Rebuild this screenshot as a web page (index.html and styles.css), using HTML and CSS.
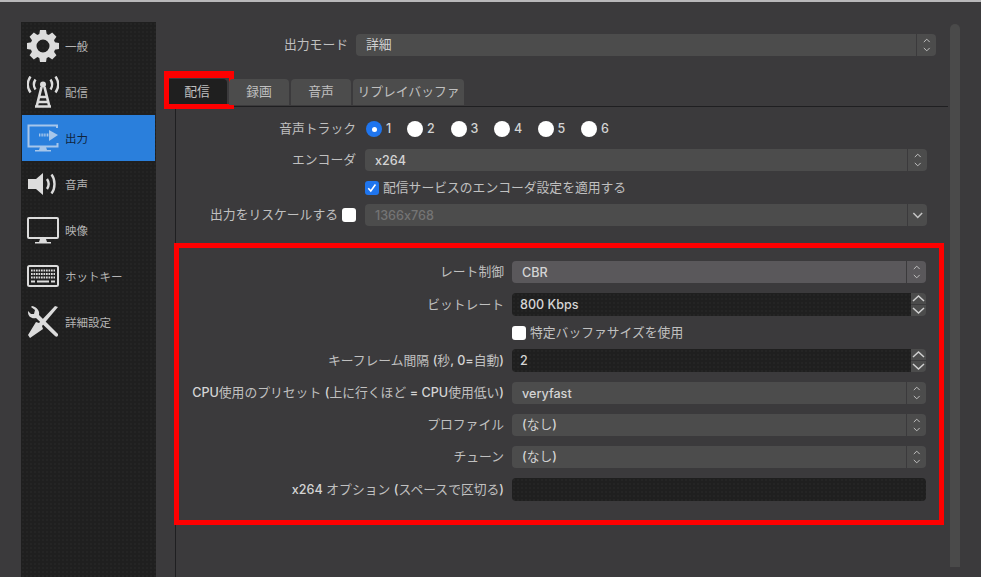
FILE: index.html
```html
<!DOCTYPE html>
<html lang="ja">
<head>
<meta charset="utf-8">
<title>設定 - 出力</title>
<link rel="stylesheet" href="styles.css">
</head>
<body>
<div class="window">
  <nav class="sidebar">
    <div class="item">
      <svg class="icon" viewBox="0 0 32 32"><circle cx="16" cy="16" r="9.500" fill="none" stroke="currentColor" stroke-width="6"/><g fill="currentColor"><path d="M13 0h6l1 6h-8z"/><path d="M13 0h6l1 6h-8z" transform="rotate(45 16 16)"/><path d="M13 0h6l1 6h-8z" transform="rotate(90 16 16)"/><path d="M13 0h6l1 6h-8z" transform="rotate(135 16 16)"/><path d="M13 0h6l1 6h-8z" transform="rotate(180 16 16)"/><path d="M13 0h6l1 6h-8z" transform="rotate(225 16 16)"/><path d="M13 0h6l1 6h-8z" transform="rotate(270 16 16)"/><path d="M13 0h6l1 6h-8z" transform="rotate(315 16 16)"/></g></svg>
      <span>一般</span>
    </div>
    <div class="item">
      <svg class="icon" viewBox="0 0 32 32"><g fill="none" stroke="currentColor" stroke-width="2.400"><path d="M3.500 .5c-3.500 5-3.500 11 0 16"/><path d="M8.500 3.500c-2 3-2 7 0 10"/><path d="M28.500 .5c3.500 5 3.500 11 0 16"/><path d="M23.500 3.500c2 3 2 7 0 10"/><path d="M14.500 11 9.500 31M17.500 11 22.500 31M12 21h8M10 26h12M8 30.500h16" stroke-width="2.600"/></g><circle cx="16" cy="8.500" r="3" fill="currentColor"/></svg>
      <span>配信</span>
    </div>
    <div class="item active">
      <svg class="icon" viewBox="0 0 32 32"><path d="M30 6V3.500H1.500V24.500H30.500V21" fill="none" stroke="currentColor" stroke-width="2"/><path d="M13 25h6l1 3h4v1.500H8V28h4z" fill="currentColor"/><path d="M12 13h11" stroke="currentColor" stroke-width="3" stroke-dasharray="1 .6" fill="none"/><path d="M22 8l9 5-9 6z" fill="currentColor"/></svg>
      <span>出力</span>
    </div>
    <div class="item">
      <svg class="icon" viewBox="0 0 32 32"><path d="M1 11h8l7-6v22l-7-6H1z" fill="currentColor"/><g fill="none" stroke="currentColor" stroke-width="2.400"><path d="M20 11c2 3 2 7 0 10"/><path d="M24.500 6.500c4 5 4 14 0 19"/></g></svg>
      <span>音声</span>
    </div>
    <div class="item">
      <svg class="icon" viewBox="0 0 32 32"><rect x="1" y="4" width="30" height="20" rx="1" fill="none" stroke="currentColor" stroke-width="2"/><path d="M13 25h6l1 3h4v1.500H8V28h4z" fill="currentColor"/></svg>
      <span>映像</span>
    </div>
    <div class="item">
      <svg class="icon" viewBox="0 0 32 32"><rect x="1" y="6" width="30" height="20" rx="1.500" fill="none" stroke="currentColor" stroke-width="2"/><g fill="none" stroke="currentColor" stroke-width="2" stroke-dasharray="1.700 .8"><path d="M4 10.500h24M4 14h24M4 17.500h24"/></g><path d="M4 21.500h4M10 21.500h12M24 21.500h4" stroke="currentColor" stroke-width="2" fill="none"/></svg>
      <span>ホットキー</span>
    </div>
    <div class="item">
      <svg class="icon" viewBox="0 0 32 32"><path d="M31 1 28 0 12 17l-3-1L1 29l2 3 13-9-1-3z" fill="currentColor"/><path d="M1 6c0 5 4 7 8 6l19 18c1 1 3 1 3-1v-1L12 9c1-4-2-8-7-9l-1 1 4 3-1 4-3 0-3-3z" fill="currentColor"/></svg>
      <span>詳細設定</span>
    </div>
  </nav>

  <main class="content">
    <div class="mode-row">
      <label class="mode-label">出力モード</label>
      <div class="combo mode-combo"><span class="combo-text">詳細</span><span class="combo-btn"><svg viewBox="0 0 20 22"><path d="M7 8l3-3 3 3M7 14l3 3 3-3"/></svg></span></div>
    </div>

    <div class="tabs">
      <div class="tab tab-active">配信<span class="tab-mark"></span></div>
      <div class="tab">録画</div>
      <div class="tab">音声</div>
      <div class="tab tab-wide">リプレイバッファ</div>
    </div>

    <section class="pane">
      <div class="upper">
        <div class="row track-row">
          <div class="label">音声トラック</div>
          <div class="radios">
            <span class="radio-item"><i class="radio on"></i><b>1</b></span>
            <span class="radio-item"><i class="radio"></i><b>2</b></span>
            <span class="radio-item"><i class="radio"></i><b>3</b></span>
            <span class="radio-item"><i class="radio"></i><b>4</b></span>
            <span class="radio-item"><i class="radio"></i><b>5</b></span>
            <span class="radio-item"><i class="radio"></i><b>6</b></span>
          </div>
        </div>
        <div class="row">
          <div class="label">エンコーダ</div>
          <div class="combo"><span class="combo-text lat">x264</span><span class="combo-btn"><svg viewBox="0 0 20 22"><path d="M7 8l3-3 3 3M7 14l3 3 3-3"/></svg></span></div>
        </div>
        <div class="row check-row">
          <div class="label"></div>
          <div class="check-item"><i class="check on"><svg viewBox="0 0 15 15"><path d="M3.500 7.800l2.700 3 5-7"/></svg></i><span>配信サービスのエンコーダ設定を適用する</span></div>
        </div>
        <div class="row">
          <div class="label label-check">出力をリスケールする<i class="check"></i></div>
          <div class="combo disabled"><span class="combo-text lat">1366x768</span><span class="combo-btn"><svg viewBox="0 0 20 22"><path class="thick" d="M5.500 9l4.500 4.500L14.500 9"/></svg></span></div>
        </div>
      </div>

      <div class="group">
        <div class="row">
          <div class="label">レート制御</div>
          <div class="combo hover"><span class="combo-text lat">CBR</span><span class="combo-btn"><svg viewBox="0 0 20 22"><path d="M7 8l3-3 3 3M7 14l3 3 3-3"/></svg></span></div>
        </div>
        <div class="row spin-row">
          <div class="label">ビットレート</div>
          <div class="spin"><span class="spin-text lat">800 Kbps</span><span class="spin-btns"><span class="spin-btn"><svg viewBox="0 0 15 11"><path d="M2 8l5.500-5L13 8"/></svg></span><span class="spin-btn"><svg viewBox="0 0 15 11"><path d="M2 3l5.500 5L13 3"/></svg></span></span></div>
        </div>
        <div class="row thin-row">
          <div class="label"></div>
          <div class="check-item"><i class="check"></i><span>特定バッファサイズを使用</span></div>
        </div>
        <div class="row spin-row">
          <div class="label">キーフレーム間隔 <span class="lat">(</span>秒<span class="lat">, 0=</span>自動<span class="lat">)</span></div>
          <div class="spin"><span class="spin-text lat">2</span><span class="spin-btns"><span class="spin-btn"><svg viewBox="0 0 15 11"><path d="M2 8l5.500-5L13 8"/></svg></span><span class="spin-btn"><svg viewBox="0 0 15 11"><path d="M2 3l5.500 5L13 3"/></svg></span></span></div>
        </div>
        <div class="row">
          <div class="label"><span class="lat">CPU</span>使用のプリセット <span class="lat">(</span>上に行くほど <span class="lat">= CPU</span>使用低い<span class="lat">)</span></div>
          <div class="combo"><span class="combo-text lat">veryfast</span><span class="combo-btn"><svg viewBox="0 0 20 22"><path d="M7 8l3-3 3 3M7 14l3 3 3-3"/></svg></span></div>
        </div>
        <div class="row">
          <div class="label">プロファイル</div>
          <div class="combo"><span class="combo-text"><span class="lat">(</span>なし<span class="lat">)</span></span><span class="combo-btn"><svg viewBox="0 0 20 22"><path d="M7 8l3-3 3 3M7 14l3 3 3-3"/></svg></span></div>
        </div>
        <div class="row">
          <div class="label">チューン</div>
          <div class="combo"><span class="combo-text"><span class="lat">(</span>なし<span class="lat">)</span></span><span class="combo-btn"><svg viewBox="0 0 20 22"><path d="M7 8l3-3 3 3M7 14l3 3 3-3"/></svg></span></div>
        </div>
        <div class="row spin-row">
          <div class="label"><span class="lat">x264</span> オプション <span class="lat">(</span>スペースで区切る<span class="lat">)</span></div>
          <div class="spin full"></div>
        </div>
      </div>
    </section>
  </main>

  <div class="scrollbar"></div>
</div>
</body>
</html>
```

FILE: styles.css
```css
* { box-sizing: border-box; }
html, body { margin: 0; height: 100%; }
body {
  background: #3b3a3c;
  overflow: hidden;
  font-family: "Liberation Sans", "Noto Sans CJK JP", sans-serif;
  font-size: 12.800px;
  line-height: 14px;
  color: #c0c0c0;
}
.window {
  height: 577px;
  display: flex;
  align-items: flex-start;
  padding: 22px 0 0 21px;
  border-top: 2px solid #b9b8ba;
}
.sidebar {
  width: 135px;
  height: 555px;
  margin-top: -2px;
  padding: 1px 1px 0;
  flex: none;
  background-color: #1f1f1f;
  background-image: radial-gradient(#242424 35%, transparent 40%);
  background-size: 4px 4px;
  display: flex;
  flex-direction: column;
}
.item {
  height: 46px;
  flex: none;
  display: flex;
  align-items: center;
  gap: 6px;
  padding-left: 5px;
  font-size: 11.500px;
  color: #b4b4b4;
}
.item span { padding-top: 2px; }
.icon { width: 32px; height: 32px; flex: none; color: #dcdcdc; }
.active { background: #2a7fdc; color: #10243c; }
.active .icon { color: #a6c6ea; }

.content {
  width: 792px;
  flex: none;
  height: 555px;
  margin-top: -2px;
  display: flex;
  flex-direction: column;
  padding-top: 12px;
}
.mode-row { display: flex; align-items: center; gap: 8px; padding-right: 12px; }
.mode-label { width: 192px; text-align: right; flex: none; }
.combo {
  flex: 1;
  height: 22px;
  display: flex;
  align-items: center;
  background: #4c4c4c;
  border-radius: 4px;
  color: #d0d0d0;
}
.combo-text { flex: 1; padding-left: 10px; }
.combo-text.lat { padding-top: 2px; }
.combo-btn {
  width: 20.500px;
  height: 100%;
  flex: none;
  border-left: 1px solid #3b3a3c;
  display: flex;
}
.combo-btn svg { width: 20px; height: 22px; }
.combo-btn path { fill: none; stroke: #c4c4c4; stroke-width: 1; }
.combo-btn path.thick { stroke-width: 1.600; }
.hover { background: #5a585b; }
.disabled .combo-text { color: #747474; }

.tabs {
  display: flex;
  gap: 2px;
  margin: 23px 0 0 11px;
  height: 26px;
  flex: none;
}
.tab {
  width: 60px;
  height: 26px;
  border-radius: 4px 4px 0 0;
  background: #4c4c4c;
  display: flex;
  align-items: center;
  justify-content: center;
  position: relative;
}
.tab-wide { width: 111px; }
.tab-active { background: #1f1f1f; }
.tab-mark {
  position: absolute;
  left: -3px;
  top: -8px;
  width: 70px;
  height: 38px;
  border: 5px solid #fe0000;
  border-top-width: 7px;
}
.pane {
  margin: 1px 0 0 19px;
  width: 773px;
  flex: 1;
  border-top: 1px solid #1f1f21;
  border-left: 1px solid #1f1f21;
  padding-top: 14px;
  display: flex;
  flex-direction: column;
}
.upper { display: flex; flex-direction: column; gap: 12px; padding-right: 21px; }
.row { display: flex; align-items: center; gap: 9px; }
.label { width: 180px; flex: none; text-align: right; white-space: nowrap; }
.track-row { height: 16px; }
.check-row { height: 15px; margin: -3px 0; }
.label-check { display: flex; align-items: center; justify-content: flex-end; gap: 4px; }
.radios { display: flex; padding-left: 1px; }
.radio-item { width: 43.500px; display: flex; align-items: center; gap: 4px; }
.radio-item:first-child { width: 41px; }
.radio-item b { font: 500 12.500px/14px Inter, "Liberation Sans", sans-serif; color: #d4d4d4; }
.radio { width: 16px; height: 16px; border-radius: 50%; background: #fff; flex: none; display: block; }
.radio.on { background: #1f75ee; position: relative; }
.radio.on::after { content: ""; position: absolute; left: 5.500px; top: 5.500px; width: 5px; height: 5px; border-radius: 50%; background: #fff; }
.check { width: 14px; height: 14px; border-radius: 3px; background: #fff; flex: none; display: block; }
.check.on { background: #1f75ee; }
.check svg { width: 14px; height: 14px; display: block; }
.check path { fill: none; stroke: #fff; stroke-width: 1.700; }
.check-item { display: flex; align-items: center; gap: 4px; }
.lat {
  font-family: Inter, "Liberation Sans", sans-serif;
  font-weight: 500;
  font-size: 12.600px;
  font-feature-settings: "calt" 0;
  color: #d4d4d4;
}
.disabled .lat { color: #747474; }

.group {
  margin: 17px 0 0 -2px;
  width: 770px;
  height: 282px;
  border: 5px solid #fe0000;
  padding: 13px 13px 0 0;
  display: flex;
  flex-direction: column;
  gap: 10px;
  flex: none;
}
.group .row { gap: 8px; }
.group .label { width: 325px; }
.spin-row { height: 23px; }
.thin-row { height: 13px; }
.spin {
  flex: 1;
  height: 23px;
  display: flex;
  align-items: center;
  background-color: #1f1f1f;
  background-image: radial-gradient(#242424 35%, transparent 40%);
  background-size: 4px 4px;
  border-radius: 4px;
}
.spin-text { flex: 1; padding-left: 8px; }
.spin-btns {
  width: 15px;
  flex: none;
  height: 23px;
  display: flex;
  flex-direction: column;
  gap: 1px;
  background: #3b3a3c;
}
.spin-btn { flex: 1; background: #4c4c4c; display: flex; }
.spin-btn:first-child { border-radius: 0 4px 0 0; }
.spin-btn:last-child { border-radius: 0 0 4px 0; }
.spin-btn svg { width: 15px; height: 11px; }
.spin-btn path { fill: none; stroke: #d0d0d0; stroke-width: 1.500; }

.scrollbar {
  width: 10px;
  height: 543px;
  flex: none;
  margin-left: 2px;
  background: #4a4a4a;
  border-radius: 5px 5px 0 0;
}
```
